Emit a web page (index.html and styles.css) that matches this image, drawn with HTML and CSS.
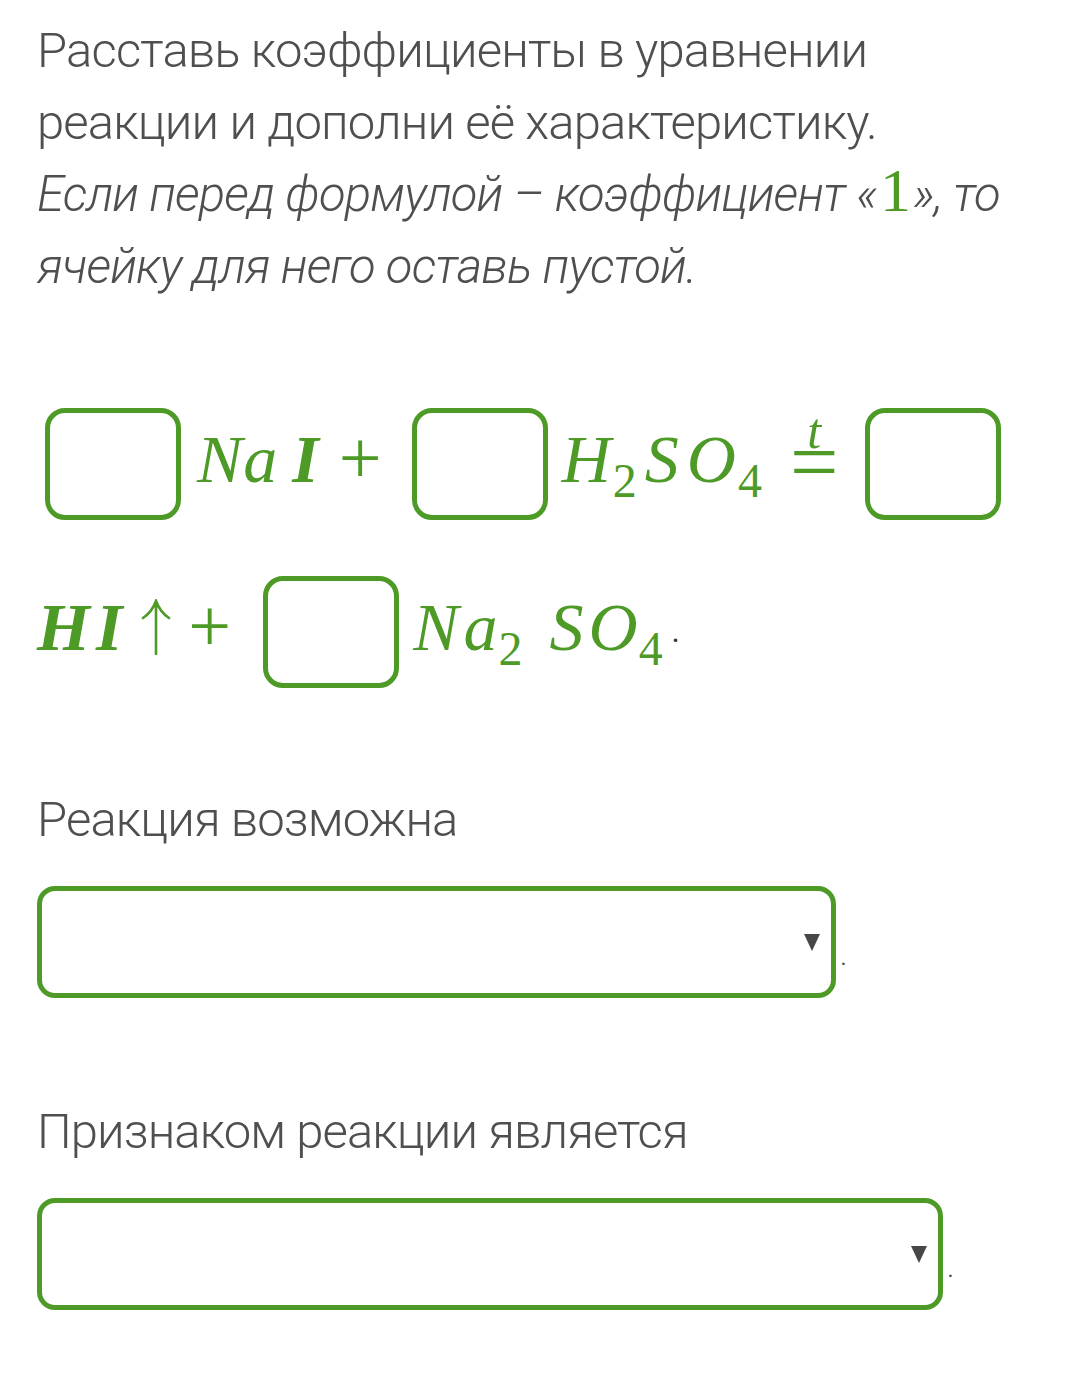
FILE: index.html
```html
<!DOCTYPE html>
<html lang="ru">
<head>
<meta charset="utf-8">
<link rel="stylesheet" href="styles.css">
</head>
<body>
<div class="page">
  <p class="intro">Расставь коэффициенты в уравнении реакции и дополни её характеристику.<br><em>Если перед формулой – коэффициент «<span class="one">1</span>», то ячейку для него оставь пустой.</em></p>

  <div class="equation">
    <div class="eq-row row1">
      <span class="cell"></span>
      <span class="m na1"><i>Na</i></span>
      <span class="m i1"><b><i>I</i></b></span>
      <span class="m plus plus1">+</span>
      <span class="cell"></span>
      <span class="m h2so4"><i>H</i><sub>2</sub><i>SO</i><sub>4</sub></span>
      <span class="eqt"><i class="t">t</i><span class="eqsign">=</span></span>
      <span class="cell"></span>
    </div>
    <div class="eq-row row2">
      <span class="m hi"><b><i>HI</i></b></span>
      <svg class="arrow" width="32" height="56" viewBox="0 0 32 56" aria-label="↑"><path d="M16 55 V3 M3 19 Q12 13 16 2 Q20 13 29 19" fill="none" stroke="#4e9a26" stroke-width="2.6" stroke-linecap="round"/></svg>
      <span class="m plus plus2">+</span>
      <span class="cell"></span>
      <span class="m na2so4"><i>Na</i><sub>2</sub> <i>SO</i><sub>4</sub></span>
      <span class="m dot">.</span>
    </div>
  </div>

  <div class="field">
    <p class="label">Реакция возможна</p>
    <div class="select-line">
      <span class="select s1"><svg class="caret" width="16" height="17" viewBox="0 0 16 17"><polygon points="0,0 16,0 8,17" fill="#474747"/></svg></span>
      <span class="period">.</span>
    </div>
  </div>

  <div class="field second">
    <p class="label">Признаком реакции является</p>
    <div class="select-line">
      <span class="select s2"><svg class="caret" width="16" height="17" viewBox="0 0 16 17"><polygon points="0,0 16,0 8,17" fill="#474747"/></svg></span>
      <span class="period">.</span>
    </div>
  </div>
</div>
</body>
</html>
```
FILE: styles.css
```css
html, body {
  margin: 0;
  padding: 0;
  background: #ffffff;
}
.page {
  padding: 15px 0 0 37px;
  font-family: Roboto, "Noto Sans", sans-serif;
  font-weight: 300;
  color: #4f4f4f;
}
.intro {
  margin: 0;
  font-size: 49px;
  line-height: 72px;
  letter-spacing: -0.85px;
  width: 1000px;
}
.intro em {
  font-style: italic;
}
.one {
  font-family: "Liberation Serif", serif;
  font-style: normal;
  color: #4e9a26;
  font-size: 62px;
  line-height: 0;
  margin: 0 3px;
}
.equation {
  margin-top: 105px;
  color: #4e9a26;
  font-family: "Liberation Serif", serif;
  font-size: 68px;
}
.eq-row {
  display: flex;
  align-items: center;
  height: 112px;
}
.row1 {
  padding-left: 8px;
}
.row2 {
  margin-top: 56px;
}
.cell {
  display: inline-block;
  box-sizing: border-box;
  width: 136px;
  height: 112px;
  border: 5px solid #4e9a26;
  border-radius: 20px;
  flex: none;
}
.m {
  white-space: nowrap;
  line-height: 68px;
  margin-bottom: 10px;
}
.m i {
  font-style: italic;
}
.m b {
  font-weight: 700;
}
.m sub {
  font-size: 48px;
  vertical-align: -15px;
  line-height: 0;
}
.plus {
  font-size: 76px;
  margin-bottom: 14px;
}
.na1 {
  margin-left: 16px;
  letter-spacing: 1px;
}
.i1 {
  margin-left: 14px;
}
.plus1 {
  margin-left: 20px;
  margin-right: 30px;
}
.h2so4 {
  margin-left: 14px;
  letter-spacing: 8px;
}
.h2so4 sub {
  margin-left: -6px;
}
.eqt {
  display: inline-flex;
  flex-direction: column;
  align-items: center;
  margin-left: 20px;
  margin-right: 27px;
  margin-bottom: 38px;
}
.eqt .t {
  font-size: 50px;
  font-style: italic;
  line-height: 34px;
  height: 34px;
}
.eqsign {
  font-size: 86px;
  line-height: 28px;
  height: 28px;
}
.hi {
  letter-spacing: 6px;
}
.arrow {
  display: block;
  flex: none;
  margin-left: 12px;
  margin-bottom: 10px;
}
.plus2 {
  margin-left: 16px;
  margin-right: 32px;
}
.na2so4 {
  margin-left: 14px;
  letter-spacing: 5px;
}
.na2so4 sub {
  margin-left: -4px;
}
.dot {
  font-size: 30px;
  color: #333333;
  margin-left: 4px;
  margin-bottom: 0;
  line-height: 30px;
}
.field {
  margin-top: 96px;
}
.field.second {
  margin-top: 98px;
}
.label {
  margin: 0;
  font-size: 49px;
  line-height: 72px;
  letter-spacing: -0.9px;
}
.select-line {
  display: flex;
  align-items: center;
  margin-top: 30px;
}
.select {
  box-sizing: border-box;
  display: flex;
  align-items: center;
  justify-content: flex-end;
  height: 112px;
  border: 5px solid #4e9a26;
  border-radius: 18px;
  padding-right: 11px;
}
.s1 { width: 799px; }
.s2 { width: 906px; }
.caret {
  display: block;
}
.period {
  font-size: 30px;
  color: #444444;
  margin: 26px 0 0 4px;
  line-height: 1;
}
```
